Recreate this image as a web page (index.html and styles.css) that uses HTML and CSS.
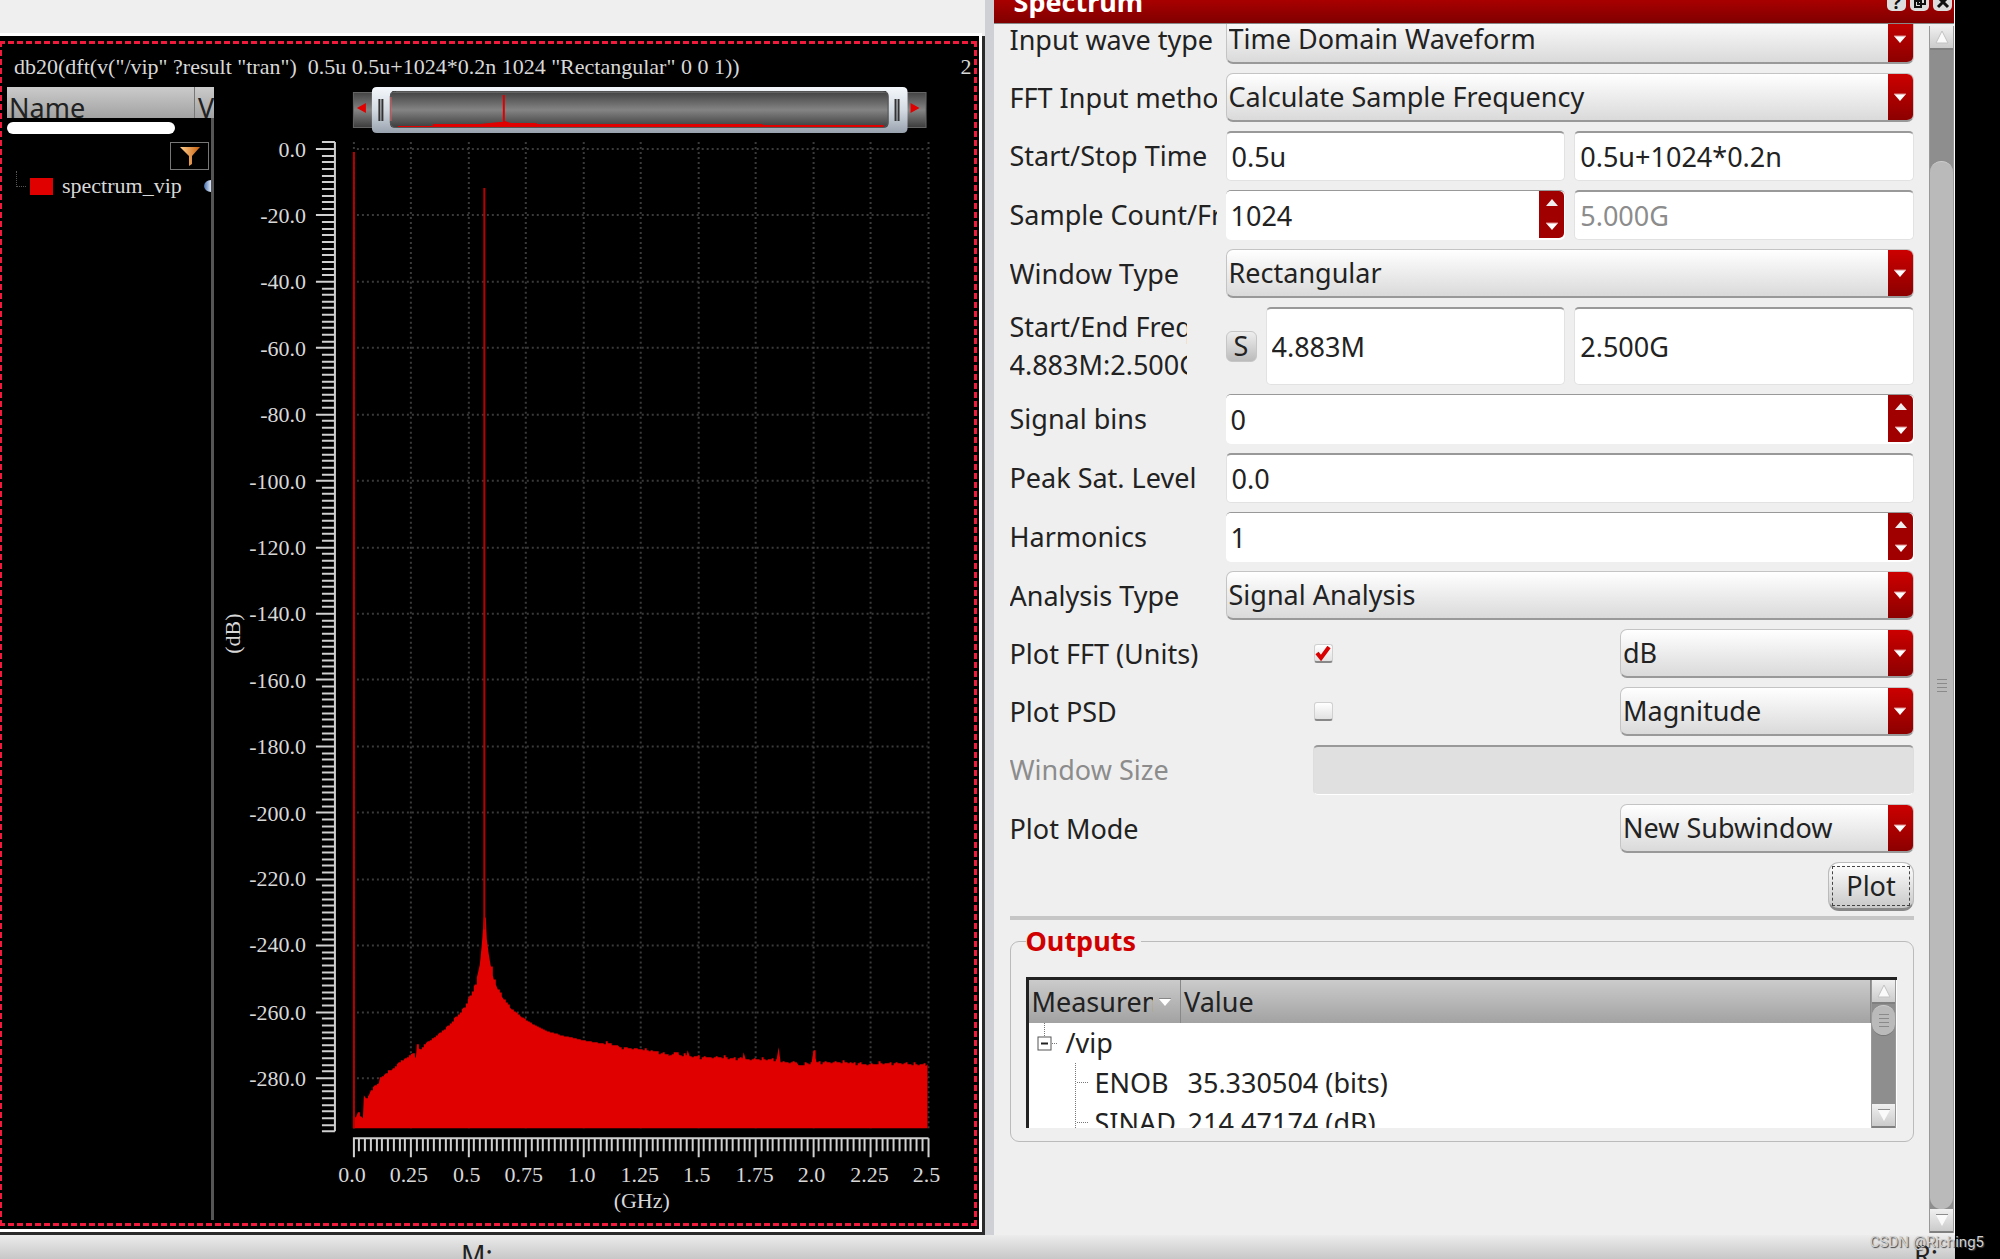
FILE: index.html
```html
<!DOCTYPE html>
<html lang="en">
<head>
<meta charset="utf-8">
<title>Spectrum</title>
<link rel="stylesheet" href="styles.css">
</head>
<body>
<svg width="0" height="0" class="defs" aria-hidden="true">
  <symbol id="tri-down" viewBox="0 0 12 8"><path d="M0 1h12L6 8z" fill="#fff"/><path d="M0 1h12" stroke="#d88" stroke-width="1"/></symbol>
  <symbol id="tri-up" viewBox="0 0 12 8"><path d="M0 7h12L6 0z" fill="#eee"/></symbol>
  <symbol id="scroll-up" viewBox="0 0 14 14"><path d="M7 1L13 13H1z" fill="#fafafa" stroke="#c2c2c2"/></symbol>
  <symbol id="scroll-down" viewBox="0 0 14 14"><path d="M1 2h12L7 13z" fill="#fafafa"/><path d="M1 1.5h12" stroke="#8c8c8c"/></symbol>
  <symbol id="grip" viewBox="0 0 10 16"><path d="M0 1.5h10M0 5.500h10M0 9.500h10M0 13.500h10" stroke="#8a8a8a"/></symbol>
</svg>
<div class="app">
  <div class="work">
    <section class="graph">
      <div class="frame">
        <div class="selection">
          <header class="graph-title">
            <span>db20(dft(v("/vip" ?result "tran")&nbsp; 0.5u 0.5u+1024*0.2n 1024 "Rectangular" 0 0 1))</span>
            <span>2</span>
          </header>
          <div class="graph-body">
            <aside class="names">
              <div class="names-head"><span class="name-col">Name</span><span class="vis-col">Vis</span></div>
              <div class="names-scroll"></div>
              <button class="filter" aria-label="Filter">
                <svg width="22" height="20" viewBox="0 0 22 20"><defs><linearGradient id="fg"><stop offset="0" stop-color="#ffd090"/><stop offset="1" stop-color="#c8600c"/></linearGradient></defs><path d="M1 1h20l-8 9v8l-3 2v-10z" fill="url(#fg)"/></svg>
              </button>
              <div class="trace">
                <span class="branch"></span><span class="swatch"></span><span class="trace-name">spectrum_vip</span><span class="eye"></span>
              </div>
            </aside>
            <svg class="chart" viewBox="214 87 760 1128" preserveAspectRatio="xMinYMin meet">
              <defs>
                <linearGradient id="tube" x2="0" y2="1"><stop offset="0" stop-color="#444"/><stop offset=".5" stop-color="#848484"/><stop offset="1" stop-color="#3c3c3c"/></linearGradient>
                <linearGradient id="glass" x2="0" y2="1"><stop offset="0" stop-color="#f4f8fc"/><stop offset=".5" stop-color="#d4dae2"/><stop offset="1" stop-color="#98a2ae"/></linearGradient>
              </defs>
              <g class="ranger">
                <rect x="353.500" y="92.500" width="573" height="35" fill="url(#tube)" stroke="#666"/>
                <path d="M357 108l9-5v10z M920 108l-9-5v10z" fill="#e00000"/>
                <path fill-rule="evenodd" fill="url(#glass)" d="M377 87h526q5 0 5 5v36q0 5-5 5h-526q-5 0-5-5v-36q0-5 5-5z M395 91q-5 0-5 5v27q0 5 5 5h489q5 0 5-5v-27q0-5-5-5z"/>
                <rect x="390.500" y="91.500" width="498" height="36" rx="5" fill="none" stroke="#555"/>
                <path d="M379.500 99v22M382.500 99v22M896 99v22M899 99v22" stroke="#333" stroke-width="2"/>
                <path d="M391 97v24" stroke="#e06060"/>
                <path d="M398 127v-1h35v-2h47l20-2h3V95h2v26l6 2h26v1h225l2 1h120v2z" fill="#e00000"/>
              </g>
              <g id="grid" class="grid"></g>
              <g id="spectrum"></g>
              <g id="ticks" class="ticks"></g>
              <g class="y-labels">
                <text x="306" y="157">0.0</text><text x="306" y="223">-20.0</text><text x="306" y="289">-40.0</text><text x="306" y="356">-60.0</text><text x="306" y="422">-80.0</text><text x="306" y="489">-100.0</text><text x="306" y="555">-120.0</text><text x="306" y="621">-140.0</text><text x="306" y="688">-160.0</text><text x="306" y="754">-180.0</text><text x="306" y="821">-200.0</text><text x="306" y="887">-220.0</text><text x="306" y="953">-240.0</text><text x="306" y="1021">-260.0</text><text x="306" y="1087">-280.0</text>
              </g>
              <g class="x-labels">
                <text x="352" y="1183">0.0</text><text x="409" y="1183">0.25</text><text x="467" y="1183">0.5</text><text x="524" y="1183">0.75</text><text x="582" y="1183">1.0</text><text x="640" y="1183">1.25</text><text x="697" y="1183">1.5</text><text x="755" y="1183">1.75</text><text x="812" y="1183">2.0</text><text x="870" y="1183">2.25</text><text x="927" y="1183">2.5</text>
                <text x="642" y="1209">(GHz)</text>
                <text transform="translate(240 634) rotate(-90)">(dB)</text>
              </g>
            </svg>
          </div>
        </div>
      </div>
    </section>
    <div class="splitter"></div>
    <section class="dock">
      <header class="dock-title">
        <h1>Spectrum</h1>
        <button aria-label="Help">?</button>
        <button aria-label="Float"><svg width="14" height="14" viewBox="0 0 14 14"><path d="M5 2h7v7H5zM2 6h6v6H2z" fill="#ddd" stroke="#111" stroke-width="2"/></svg></button>
        <button aria-label="Close"><svg width="14" height="14" viewBox="0 0 14 14"><path d="M2 2l10 10M12 2L2 12" stroke="#111" stroke-width="3"/></svg></button>
      </header>
      <div class="dock-body">
        <form class="form" onsubmit="return false">
          <div class="row"><label for="wave">Input wave type</label>
            <div class="field"><span class="combo"><select id="wave"><option>Time Domain Waveform</option></select><i><svg width="12" height="8"><use href="#tri-down"/></svg></i></span></div></div>
          <div class="row"><label for="method">FFT Input method</label>
            <div class="field"><span class="combo"><select id="method"><option>Calculate Sample Frequency</option></select><i><svg width="12" height="8"><use href="#tri-down"/></svg></i></span></div></div>
          <div class="row"><label for="start">Start/Stop Time</label>
            <div class="field pair"><input class="text" id="start" value="0.5u"><input class="text" aria-label="Stop time" value="0.5u+1024*0.2n"></div></div>
          <div class="row"><label for="count">Sample Count/Freq</label>
            <div class="field pair"><span class="spin"><input class="text" id="count" value="1024"><span class="steps"><button aria-label="Up"><svg width="12" height="8"><use href="#tri-up"/></svg></button><button aria-label="Down"><svg width="12" height="8"><use href="#tri-down"/></svg></button></span></span><input class="text muted" aria-label="Sample frequency" value="5.000G" readonly></div></div>
          <div class="row"><label for="window">Window Type</label>
            <div class="field"><span class="combo"><select id="window"><option>Rectangular</option></select><i><svg width="12" height="8"><use href="#tri-down"/></svg></i></span></div></div>
          <div class="row range"><label for="fstart">Start/End Freq<br>4.883M:2.500G</label>
            <div class="field pair"><span class="with-button"><button class="small">S</button><input class="text" id="fstart" value="4.883M"></span><input class="text" aria-label="End frequency" value="2.500G"></div></div>
          <div class="row"><label for="bins">Signal bins</label>
            <div class="field"><span class="spin"><input class="text" id="bins" value="0"><span class="steps"><button aria-label="Up"><svg width="12" height="8"><use href="#tri-up"/></svg></button><button aria-label="Down"><svg width="12" height="8"><use href="#tri-down"/></svg></button></span></span></div></div>
          <div class="row"><label for="peak">Peak Sat. Level</label>
            <div class="field"><input class="text" id="peak" value="0.0"></div></div>
          <div class="row"><label for="harm">Harmonics</label>
            <div class="field"><span class="spin"><input class="text" id="harm" value="1"><span class="steps"><button aria-label="Up"><svg width="12" height="8"><use href="#tri-up"/></svg></button><button aria-label="Down"><svg width="12" height="8"><use href="#tri-down"/></svg></button></span></span></div></div>
          <div class="row"><label for="analysis">Analysis Type</label>
            <div class="field"><span class="combo"><select id="analysis"><option>Signal Analysis</option></select><i><svg width="12" height="8"><use href="#tri-down"/></svg></i></span></div></div>
          <div class="row"><label for="fft">Plot FFT (Units)</label>
            <div class="field indent"><span class="check"><input type="checkbox" id="fft" checked><svg width="16" height="16" viewBox="0 0 16 16"><path d="M2 7l4 5 8-11" fill="none" stroke="#d80000" stroke-width="4"/></svg></span><span class="combo short"><select aria-label="FFT units"><option>dB</option></select><i><svg width="12" height="8"><use href="#tri-down"/></svg></i></span></div></div>
          <div class="row"><label for="psd">Plot PSD</label>
            <div class="field indent"><span class="check"><input type="checkbox" id="psd"></span><span class="combo short"><select aria-label="PSD units"><option>Magnitude</option></select><i><svg width="12" height="8"><use href="#tri-down"/></svg></i></span></div></div>
          <div class="row"><label for="size" class="muted">Window Size</label>
            <div class="field indent"><input class="text" id="size" disabled></div></div>
          <div class="row"><label for="mode">Plot Mode</label>
            <div class="field end"><span class="combo short"><select id="mode"><option>New Subwindow</option></select><i><svg width="12" height="8"><use href="#tri-down"/></svg></i></span></div></div>
          <div class="row actions"><button class="plot"><span>Plot</span></button></div>
          <hr>
          <fieldset class="outputs">
            <legend>Outputs</legend>
            <div class="tree">
              <table>
                <colgroup><col class="c1"><col></colgroup>
                <thead><tr>
                  <th><div class="measure"><span>Measurement</span><svg width="12" height="8" viewBox="0 0 12 8"><path d="M0 1h12L6 8z" fill="#fff"/><path d="M0 .5h12" stroke="#888"/></svg></div></th>
                  <th>Value</th></tr></thead>
                <tbody>
                  <tr><td><div class="node"><svg width="26" height="40" viewBox="0 0 26 40"><path d="M12.500 0v13M20 20.500h6" stroke="#777" stroke-dasharray="1 1"/><rect x="6" y="14" width="13" height="13" fill="#fff" stroke="#555"/><path d="M9 20.500h7" stroke="#222" stroke-width="2"/></svg><span>/vip</span></div></td><td></td></tr>
                  <tr><td><div class="node leaf"><svg width="14" height="40" viewBox="0 0 14 40"><path d="M.5 0v40M2 19.500h12" stroke="#777" stroke-dasharray="1 1"/></svg><span>ENOB</span></div></td><td>35.330504 (bits)</td></tr>
                  <tr><td><div class="node leaf"><svg width="14" height="40" viewBox="0 0 14 40"><path d="M.5 0v40M2 19.500h12" stroke="#777" stroke-dasharray="1 1"/></svg><span>SINAD</span></div></td><td>214.47174 (dB)</td></tr>
                </tbody>
              </table>
              <div class="scrollbar inner"><span class="cap"><svg width="14" height="14"><use href="#scroll-up"/></svg></span><span class="track"><span class="thumb"><svg width="10" height="16"><use href="#grip"/></svg></span></span><span class="cap"><svg width="14" height="14"><use href="#scroll-down"/></svg></span></div>
            </div>
          </fieldset>
        </form>
        <div class="scrollbar"><span class="cap"><svg width="14" height="14"><use href="#scroll-up"/></svg></span><span class="track"><span class="thumb"><svg width="10" height="16"><use href="#grip"/></svg></span></span><span class="cap"><svg width="14" height="14"><use href="#scroll-down"/></svg></span></div>
      </div>
    </section>
  </div>
  <footer class="status"><span>M:</span><span>R:</span></footer>
</div>
<div class="watermark">CSDN @Riching5</div>
<script src="chart.js"></script>
</body>
</html>
```
FILE: styles.css
```css
* { box-sizing: border-box; }
body {
  margin: 0;
  height: 100vh;
  overflow: hidden;
  background: #000;
  color: #222;
  font: 27px/38px "Noto Sans", "Open Sans", sans-serif;
  padding-right: 45px;
}
button, input, select { font: inherit; color: inherit; margin: 0; }
.defs { position: absolute; }
.app { display: flex; flex-direction: column; height: 100vh; background: #efefef; }
.work { flex: 1; display: flex; min-height: 0; }

/* Graph window */
.graph { flex: 985 1 0; min-width: 0; display: flex; padding-top: 33px; }
.frame {
  flex: 1; min-width: 0; display: flex;
  background: #000;
  border: solid #fff; border-width: 3px 3px 3px 0;
  padding: 5px 2px 3px 0;
  margin: 0 3px 3px 0;
  box-shadow: 3px 3px 0 #2a2a2a, 0 3px 0 #2a2a2a;
}
.selection {
  flex: 1; min-width: 0; display: flex; flex-direction: column;
  margin-left: -1px;
  border: 3px dashed #f01a3c;
  color: #d8d8d8;
  font: 22px/28px "Liberation Serif", serif;
}
.graph-title { display: flex; justify-content: space-between; padding: 9px 2px 6px 12px; white-space: nowrap; }
.graph-body { flex: 1; min-height: 0; display: flex; padding-left: 5px; }
.names { flex: none; width: 207px; display: flex; flex-direction: column; margin-bottom: 3px; border-right: 3px solid #555; }
.names-head {
  display: flex; height: 31px; overflow: hidden; margin-right: -3px;
  background: linear-gradient(#cbcbcb, #a2a2a2);
  color: #222; font: 27px/42px "Noto Sans", sans-serif;
}
.name-col { flex: 1; padding-left: 2px; }
.vis-col { width: 20px; overflow: hidden; padding-left: 3px; border-left: 1px solid #777; }
.names-scroll { width: 168px; height: 12px; margin-top: 4px; border-radius: 6px; background: #fff; }
.filter { align-self: flex-end; display: grid; place-items: center; width: 39px; height: 28px; margin: 8px 2px 0 0; padding: 0; background: #000; border: 1px solid #777; }
.trace { display: flex; align-items: center; height: 32px; overflow: hidden; }
.branch { width: 10px; height: 16px; margin: -14px 4px 0 9px; border: dotted #555; border-width: 0 0 1px 1px; }
.swatch { width: 23px; height: 17px; background: #e00000; }
.trace-name { flex: 1; padding-left: 9px; }
.eye { flex: none; width: 14px; height: 12px; margin-right: -7px; border-radius: 50%; background: linear-gradient(90deg, #456fae, #dfe9f7 50%); }
.chart { flex: 1; min-width: 0; height: 100%; }
.chart text { fill: #d8d8d8; }
.y-labels { text-anchor: end; }
.x-labels { text-anchor: middle; }
.ticks { stroke: #d0d0d0; stroke-width: 2; fill: none; }
.grid { stroke: #3a3a3a; stroke-width: 2; stroke-dasharray: 2 3; }

.splitter { flex: none; width: 9px; background: #cfd0d5; }

/* Dock panel */
.dock { flex: 961 1 0; min-width: 0; display: flex; flex-direction: column; border-right: 1px solid #fff; }
.dock-title {
  flex: none; display: flex; align-items: center; gap: 4px;
  height: 44px; margin-top: -20px; padding: 0 2px 0 20px;
  background: linear-gradient(#c00, #800000);
  border-bottom: 1px solid #888; color: #fff;
}
.dock-title h1 { flex: 1; margin: 0; font-size: 27px; }
.dock-title button { display: grid; place-items: center; width: 19px; height: 19px; padding: 0; border: 0; border-radius: 5px; background: #ddd; color: #111; font: bold 18px/18px "Noto Sans", sans-serif; }
.dock-body { flex: 1; min-height: 0; display: flex; overflow: hidden; }
.form { flex: 1; min-width: 0; margin-top: -9px; padding: 0 15px 0 16px; display: flex; flex-direction: column; gap: 9px; }
.row { flex: none; display: flex; align-items: center; gap: 9px; white-space: nowrap; }
.row label { flex: none; width: 207px; overflow: hidden; }
.field { flex: 1; min-width: 0; display: flex; align-items: center; justify-content: space-between; gap: 9px; }
.pair { display: grid; grid-template-columns: 1fr 1fr; }
.indent { padding-left: 87px; }
.end { justify-content: flex-end; }
.text {
  flex: 1 1 0; min-width: 0; width: 100%; height: 50px;
  padding: 0 5px; border: 1px solid #e2e2e2; border-top: 2px solid #999;
  border-radius: 5px; background: #fff; outline: none;
}
.text:disabled { background: #e0e0e0; border-color: #999 #ddd #fff; }
.muted { color: #8c8c8c; }
.combo {
  flex: 1; display: flex; height: 49px; overflow: hidden;
  border: 1px solid #c4c4c4; border-bottom: 2px solid #999; border-radius: 7px;
  background: linear-gradient(#fff, #dadada);
}
.combo.short { flex: none; width: 294px; }
.combo select { flex: 1; min-width: 0; appearance: none; border: 0; padding: 0 0 0 2px; background: none; outline: none; }
.combo i { display: grid; place-items: center; width: 25px; padding-right: 1px; background: linear-gradient(#cc0000, #8c0000); }
.spin { flex: 1 1 0; min-width: 0; display: flex; height: 50px; padding-right: 1px; border-top: 1px solid #999; border-radius: 5px; background: #fff; overflow: hidden; }
.spin .text { border: 0; height: 48px; padding-left: 5px; }
.steps { flex: none; width: 25px; height: 47px; display: flex; flex-direction: column; border-radius: 0 5px 5px 0; overflow: hidden; background: #a00000; }
.steps button { flex: 1; display: grid; place-items: center; padding: 0; border: 0; background: none; }
.range .text { height: 78px; }
.range label { width: 177px; margin-right: 30px; }
.with-button { min-width: 0; display: flex; align-items: center; gap: 9px; }
.small { flex: none; width: 31px; height: 31px; padding: 0; border: 1px solid #c6c6c6; border-radius: 6px; background: linear-gradient(#eee, #bbb); line-height: 28px; }
.check { display: grid; place-items: center; margin-left: 1px; }
.check > * { grid-area: 1 / 1; }
.check svg { pointer-events: none; }
.check input { appearance: none; width: 19px; height: 19px; border: 1px solid #d0d0d0; border-bottom: 2px solid #888; border-radius: 3px; background: linear-gradient(#fff, #e2e2e2); }
.actions { justify-content: flex-end; height: 49px; }
.plot { width: 86px; height: 49px; padding: 3px; border: 1px solid #bbb; border-bottom: 3px solid #888; border-radius: 11px; background: linear-gradient(#fff, #c8c8c8); }
.plot span { display: block; line-height: 38px; border: 1px dashed #444; }
hr { width: 100%; height: 4px; margin: -4px 0 0; border: 0; background: #c6c6c6; }

/* Outputs */
.outputs { min-width: 0; margin: -7px 0 0; padding: 17px 16px 13px 15px; border: 1px solid #bbb; border-radius: 9px; }
.outputs legend { padding: 0 5px 0 0; color: #d00000; font-weight: bold; }
.tree { display: flex; height: 151px; overflow: hidden; border: solid #222; border-width: 3px 0 0 3px; background: #fff; }
table { flex: 1; align-self: flex-start; min-width: 0; table-layout: fixed; border-collapse: collapse; text-align: left; white-space: nowrap; }
.c1 { width: 152px; }
th { height: 43px; padding: 0 3px; background: linear-gradient(#cbcbcb, #a2a2a2); font-weight: normal; border-right: 1px solid #888; }
td { height: 40px; padding: 0; line-height: 40px; }
td + td { padding-left: 7px; }
.measure { display: flex; align-items: center; gap: 6px; }
.measure span { width: 121px; overflow: hidden; }
.measure svg { flex: none; }
.node { display: flex; align-items: center; height: 40px; gap: 8px; padding-left: 3px; }
.leaf { padding-left: 46px; gap: 6px; }

/* Scroll bars */
.scrollbar { flex: none; width: 25px; margin: 2px 0; display: flex; flex-direction: column; background: #8e8e8e; border: solid #999; border-width: 0 1px; }
.cap { flex: none; height: 24px; display: grid; place-items: center; background: linear-gradient(#f0f0f0, #cbcbcb); border-bottom: 2px solid #808080; }
.track { flex: 1; display: flex; flex-direction: column; padding-top: 111px; min-height: 0; }
.thumb { flex: 1; display: grid; place-items: center; border-radius: 12px; background: #bababa; border-top: 1px solid #ccc; }
.inner { margin: 0 1px 0 0; }
.inner .track { padding-top: 1px; }
.inner .thumb { flex: none; height: 31px; border-bottom: 1px solid #777; }

.status { flex: none; display: flex; justify-content: space-between; height: 24px; padding: 0 17px 0 461px; overflow: hidden; line-height: 40px; background: linear-gradient(#ececec, #c8c8c8); }
.watermark { position: absolute; right: 16px; bottom: 6px; color: #d0d0d0; font: 15px/22px Roboto, sans-serif; text-shadow: 1px 1px 1px #444; }
```
FILE: chart.js
```js
// Axis geometry in the chart's own units.
const X0 = 353.5, DX = 57.5, Y0 = 149, DY = 66.43, BASE = 1129;

let grid = '', ticks = 'M335 142V1132M353 1139H929';
for (let i = 0; i <= 10; i++) {
  const x = Math.round(X0 + i * DX);
  grid += `<path d="M${x} 142V1130"/>`;
}
for (let i = 0; i <= 14; i++) {
  const y = Math.round(Y0 + i * DY);
  grid += `<path d="M357 ${y}H928"/>`;
}
for (let i = -1; i <= 148; i++) {
  const y = Math.round(Y0 + i * DY / 10);
  ticks += `M${i % 10 === 0 ? 316 : 322} ${y}H335`;
}
for (let i = 0; i <= 100; i++) {
  const x = Math.round(X0 + i * DX / 10);
  ticks += `M${x} 1139V${i % 10 === 0 ? 1158 : 1152}`;
}
document.getElementById('grid').innerHTML = grid;
document.getElementById('ticks').innerHTML = `<path d="${ticks}"/>`;

const outline = [[353,1117],[356,1118],[358,1113],[361,1117],[363,1119],[364,1096],[366,1099],[369,1096],[371,1091],
  [375,1086],[379,1084],[380,1078],[386,1074],[393,1069],[399,1063],[405,1059],[413,1054],[416,1059],[417,1045],
  [420,1050],[428,1042],[440,1033],[448,1026],[456,1017],[464,1008],[470,996],[475,985],[478,974],[480,965],
  [482,945],[484,918],[486,918],[487,940],[489,955],[491,967],[494,980],[498,990],[504,1000],[512,1010],[522,1018],
  [533,1025],[548,1032],[565,1037],[582,1041],[600,1044],[610,1044],[620,1048],[641,1050],[655,1052],[670,1056],
  [677,1053],[680,1056],[687,1056],[688,1051],[690,1057],[710,1058],[743,1059],[744,1053],[746,1060],[777,1060],
  [779,1048],[781,1063],[797,1063],[799,1066],[812,1063],[814,1051],[817,1063],[846,1063],[865,1065],[886,1064],[928,1065]];

const jitter = [0, 1, 0, -1, 0, 0, 1, -2, 0, 1, 0, 0, -1, 2, 0, -1, 0];
let d = `M353 ${BASE}`, n = 0;
for (let k = 0; k < outline.length - 1; k++) {
  const [xa, ya] = outline[k], [xb, yb] = outline[k + 1];
  d += `L${xa} ${ya}`;
  for (let x = xa + 2; x < xb; x += 2) {
    const y = Math.round(ya + (yb - ya) * (x - xa) / (xb - xa)) + (x > 600 || x < 430 ? jitter[n++ % jitter.length] : 0);
    d += `H${x}V${y}`;
  }
}
d += `L928 1065V${BASE}Z`;
document.getElementById('spectrum').innerHTML =
  `<path d="${d}" fill="#e00000"/>` +
  `<path d="M354 152V${BASE}M484.500 188V930" stroke="#b80000" stroke-width="2"/>`;
```
